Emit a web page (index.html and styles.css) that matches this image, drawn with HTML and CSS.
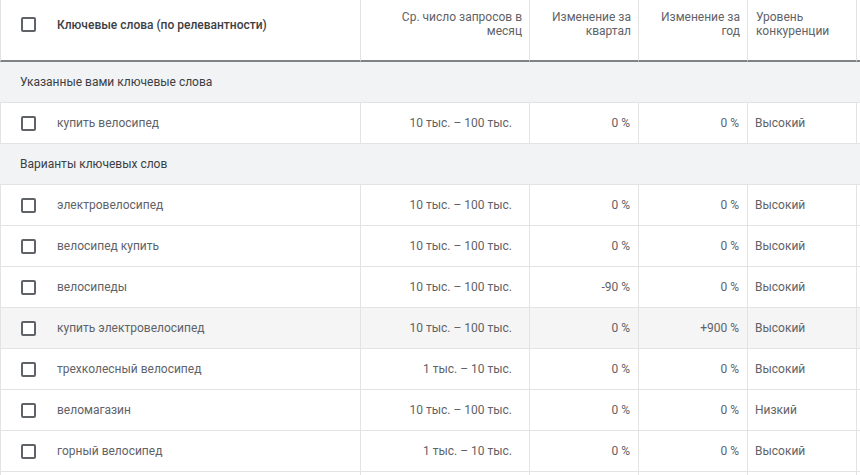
FILE: index.html
```html
<!DOCTYPE html>
<html lang="ru">
<head>
<meta charset="utf-8">
<title>Ключевые слова</title>
<link rel="stylesheet" href="styles.css">
</head>
<body>
<table class="kw-table">
  <colgroup>
    <col class="c-kw">
    <col class="c-vol">
    <col class="c-q">
    <col class="c-y">
    <col class="c-comp">
    <col class="c-rest">
  </colgroup>
  <thead>
    <tr>
      <th class="h-kw"><div class="kw-cell"><span class="cb"></span><span class="h-title">Ключевые слова (по релевантности)</span></div></th>
      <th class="h-num">Ср. число запросов в месяц</th>
      <th class="h-num">Изменение за квартал</th>
      <th class="h-num">Изменение за год</th>
      <th class="h-text">Уровень конкуренции</th>
      <th class="h-text rest"></th>
    </tr>
  </thead>
  <tbody>
    <tr class="section"><td colspan="6">Указанные вами ключевые слова</td></tr>
    <tr>
      <td><div class="kw-cell"><span class="cb"></span>купить велосипед</div></td>
      <td class="vol">10 тыс. – 100 тыс.</td><td class="num">0 %</td><td class="num">0 %</td><td class="txt">Высокий</td><td class="rest"></td>
    </tr>
    <tr class="section"><td colspan="6">Варианты ключевых слов</td></tr>
    <tr>
      <td><div class="kw-cell"><span class="cb"></span>электровелосипед</div></td>
      <td class="vol">10 тыс. – 100 тыс.</td><td class="num">0 %</td><td class="num">0 %</td><td class="txt">Высокий</td><td class="rest"></td>
    </tr>
    <tr>
      <td><div class="kw-cell"><span class="cb"></span>велосипед купить</div></td>
      <td class="vol">10 тыс. – 100 тыс.</td><td class="num">0 %</td><td class="num">0 %</td><td class="txt">Высокий</td><td class="rest"></td>
    </tr>
    <tr>
      <td><div class="kw-cell"><span class="cb"></span>велосипеды</div></td>
      <td class="vol">10 тыс. – 100 тыс.</td><td class="num">-90 %</td><td class="num">0 %</td><td class="txt">Высокий</td><td class="rest"></td>
    </tr>
    <tr class="hover">
      <td><div class="kw-cell"><span class="cb"></span>купить электровелосипед</div></td>
      <td class="vol">10 тыс. – 100 тыс.</td><td class="num">0 %</td><td class="num">+900 %</td><td class="txt">Высокий</td><td class="rest"></td>
    </tr>
    <tr>
      <td><div class="kw-cell"><span class="cb"></span>трехколесный велосипед</div></td>
      <td class="vol">1 тыс. – 10 тыс.</td><td class="num">0 %</td><td class="num">0 %</td><td class="txt">Высокий</td><td class="rest"></td>
    </tr>
    <tr>
      <td><div class="kw-cell"><span class="cb"></span>веломагазин</div></td>
      <td class="vol">10 тыс. – 100 тыс.</td><td class="num">0 %</td><td class="num">0 %</td><td class="txt">Низкий</td><td class="rest"></td>
    </tr>
    <tr>
      <td><div class="kw-cell"><span class="cb"></span>горный велосипед</div></td>
      <td class="vol">1 тыс. – 10 тыс.</td><td class="num">0 %</td><td class="num">0 %</td><td class="txt">Высокий</td><td class="rest"></td>
    </tr>
    <tr class="filler">
      <td></td><td></td><td></td><td></td><td></td><td class="rest"></td>
    </tr>
  </tbody>
</table>
</body>
</html>
```
FILE: styles.css
```css
* { box-sizing: border-box; }
html, body {
  margin: 0;
  padding: 0;
  background: #fff;
  overflow: hidden;
}
body {
  font-family: Roboto, "Noto Sans", Arial, sans-serif;
  font-size: 12px;
  color: #5f6368;
}
.kw-table {
  border-collapse: separate;
  border-spacing: 0;
  table-layout: fixed;
  width: 860px;
}
.c-kw { width: 361px; }
.c-vol { width: 169px; }
.c-q { width: 109px; }
.c-y { width: 109px; }
.c-comp { width: 109px; }
.c-rest { width: 3px; }

th, td {
  padding: 0;
  border-right: 1px solid #e3e3e3;
  border-bottom: 1px solid #e3e3e3;
  white-space: nowrap;
}
th:first-child, td:first-child { border-left: 1px solid #e3e3e3; }
th.rest, td.rest { border-right: none; }

thead th {
  height: 62px;
  vertical-align: top;
  font-weight: 400;
  line-height: 14px;
  color: #5f6368;
  border-bottom: 2px solid #7f8388;
  white-space: normal;
}
.h-kw { padding: 17px 0 0 0; text-align: left; }
.h-title { font-weight: 500; color: #3c4043; }
.h-num { text-align: right; padding: 10px 7px 0 8px; }
.h-text { text-align: left; padding: 10px 8px 0 8px; }
th.rest { padding: 0; }

tbody td { height: 41px; line-height: 14px; vertical-align: middle; }
tbody .filler td { height: 3px; border-bottom: none; }
.kw-cell {
  display: flex;
  align-items: center;
  gap: 21px;
  padding-left: 20px;
}
tbody .kw-cell { color: #5f6368; }
.cb {
  display: inline-block;
  flex: none;
  width: 15px;
  height: 15px;
  border: 2px solid #5f6368;
  border-radius: 2px;
  background: #fff;
}
.vol { text-align: right; padding-right: 17px; }
.num { text-align: right; padding-right: 8px; }
.txt { text-align: left; padding-left: 7px; }

.section td {
  background: #f1f3f4;
  border-right: none;
  padding-left: 20px;
  color: #3c4043;
}
.section td:first-child { border-left: none; }
.hover td { background: #f5f5f5; }
```
